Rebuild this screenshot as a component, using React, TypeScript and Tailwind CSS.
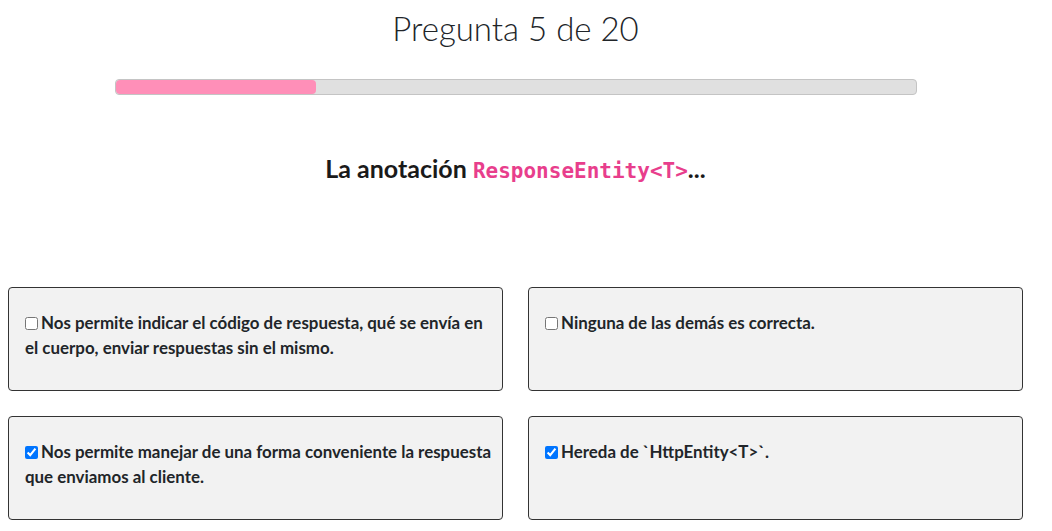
import React from "react";

const options = [
  { text: "Nos permite indicar el código de respuesta, qué se envía en el cuerpo, enviar respuestas sin el mismo.", checked: false },
  { text: "Ninguna de las demás es correcta.", checked: false },
  { text: "Nos permite manejar de una forma conveniente la respuesta que enviamos al cliente.", checked: true },
  { text: "Hereda de `HttpEntity<T>`.", checked: true },
];

export default function App() {
  return (
    <div className="bg-white w-[1052px] h-[531px] overflow-hidden text-[#212529]" style={{ fontFamily: "Lato, 'Open Sans', sans-serif" }}>
      <div className="ml-[8px] w-[1015px] flex flex-col items-center">
        <h1 className="mt-[8px] text-[33px] font-light leading-[40px] text-[#212529]">Pregunta 5 de 20</h1>
        <div className="mt-[31px] w-[802px] h-[16px] rounded-[4px] border border-[#c4c4c4] bg-[#e0e0e0] overflow-hidden">
          <div className="h-full bg-[#ff8fb8] rounded-[4px]" style={{ width: "25%" }} />
        </div>
        <h2 className="mt-[57px] text-[25px] font-bold leading-[32px] text-[#1a1a1a]">
          La anotación{" "}
          <code className="text-[21px] text-[#e83e8c] font-bold" style={{ fontFamily: "'DejaVu Sans Mono', monospace" }}>ResponseEntity&lt;T&gt;</code>...
        </h2>
      </div>
      <div className="ml-[8px] mt-[100px] w-[1015px] grid grid-cols-2 gap-[25px]">
        {options.map((o, i) => (
          <div key={i} className="h-[104px] bg-[#f2f2f2] border border-[#333] rounded-[4px] pl-[16px] pr-[4px] pt-[22px]">
            <label className="text-[16.9px] font-bold leading-[25px] text-[#212529]">
              <input type="checkbox" defaultChecked={o.checked} className="w-[13px] h-[13px] mr-[3px] align-[-1px]" />
              {o.text}
            </label>
          </div>
        ))}
      </div>
    </div>
  );
}
